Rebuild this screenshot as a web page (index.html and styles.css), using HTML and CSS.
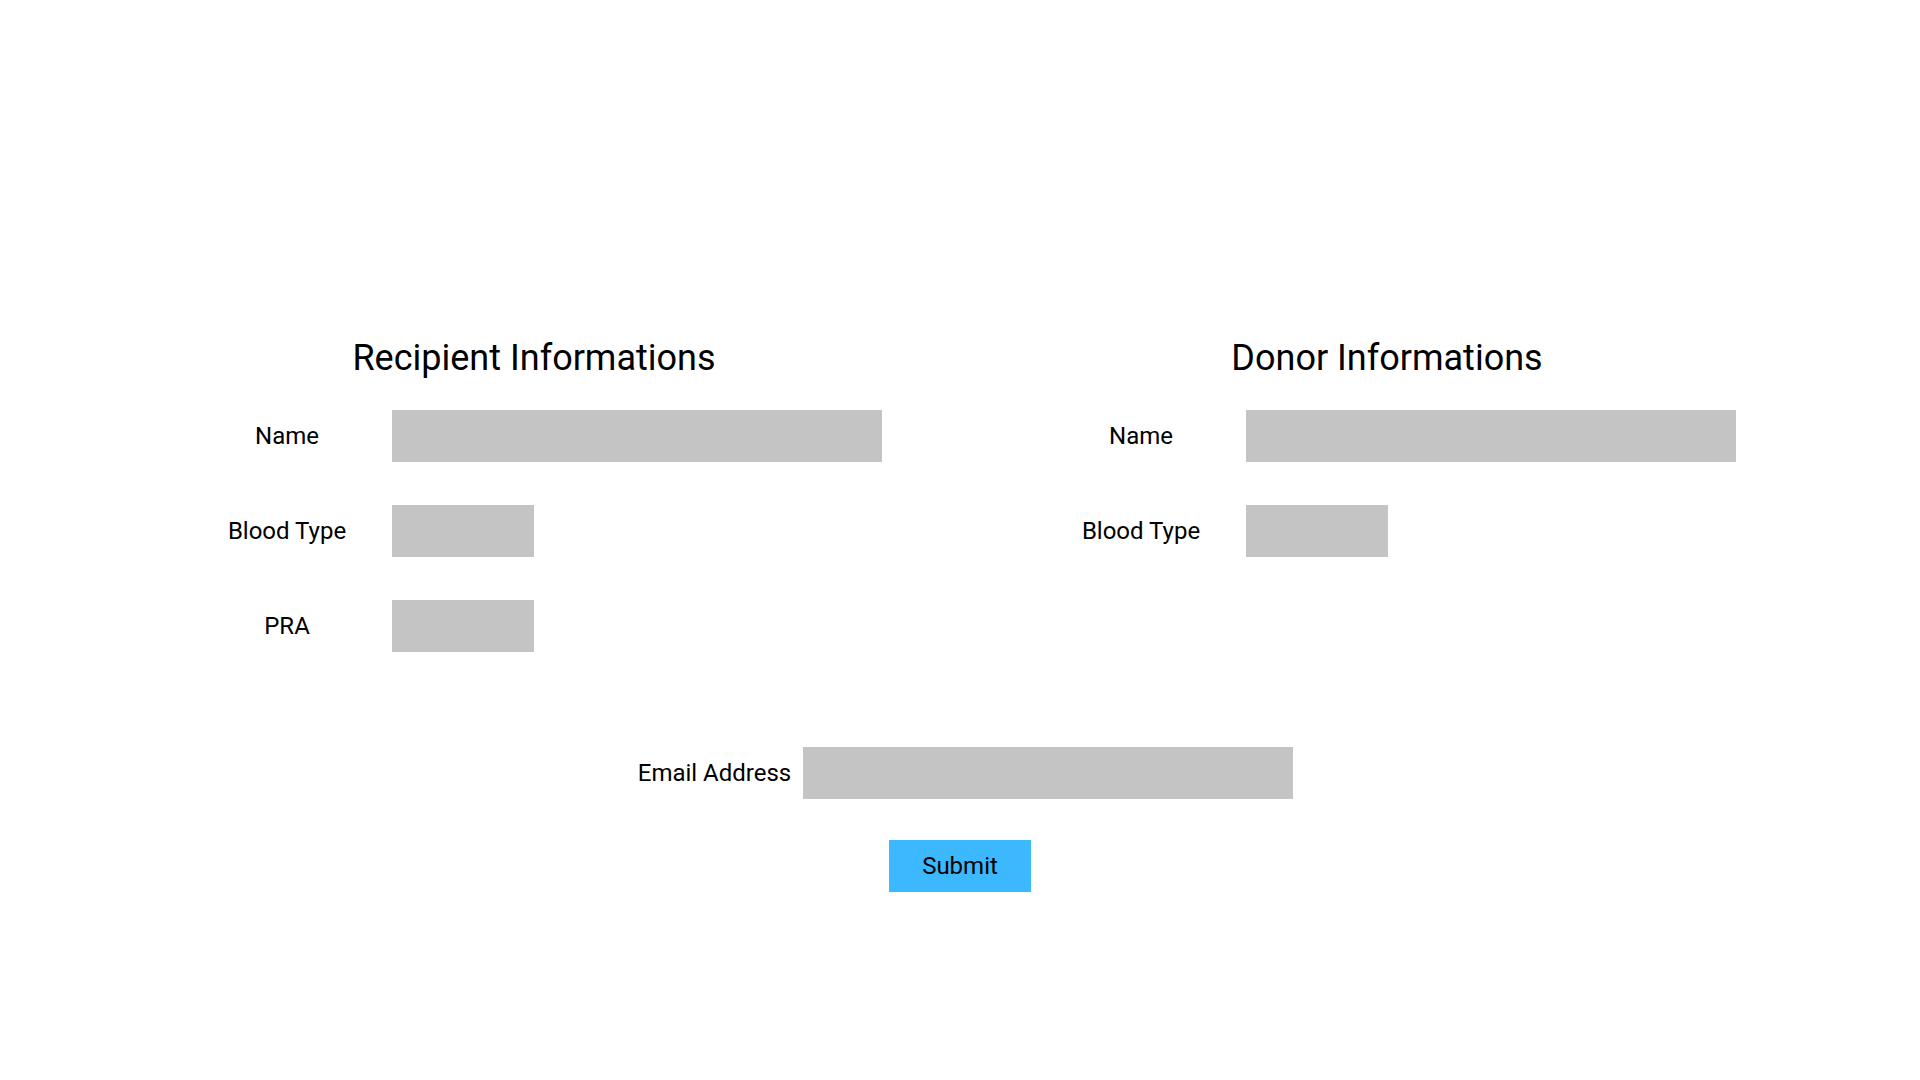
FILE: index.html
```html
<!DOCTYPE html>
<html lang="en">
<head>
<meta charset="utf-8">
<title>Donor / Recipient Form</title>
<link rel="stylesheet" href="styles.css">
</head>
<body>
<main class="page">
  <div class="columns">
    <section class="col">
      <h2 class="col-title">Recipient Informations</h2>
      <div class="rows">
        <div class="row"><span class="label">Name</span><span class="field field-wide"></span></div>
        <div class="row"><span class="label">Blood Type</span><span class="field field-short"></span></div>
        <div class="row"><span class="label">PRA</span><span class="field field-short"></span></div>
      </div>
    </section>
    <section class="col">
      <h2 class="col-title">Donor Informations</h2>
      <div class="rows">
        <div class="row"><span class="label">Name</span><span class="field field-wide"></span></div>
        <div class="row"><span class="label">Blood Type</span><span class="field field-short"></span></div>
      </div>
    </section>
  </div>
  <div class="email-row">
    <span class="email-label">Email Address</span>
    <span class="field field-wide"></span>
  </div>
  <div class="submit-row">
    <button class="submit" type="button">Submit</button>
  </div>
</main>
</body>
</html>
```

FILE: styles.css
```css
html, body {
  margin: 0;
  padding: 0;
  background: #ffffff;
}

body {
  font-family: Roboto, "Liberation Sans", sans-serif;
  color: #000000;
  width: 1920px;
  height: 1080px;
  overflow: hidden;
}

.page {
  padding: 337px 107px 0 107px;
}

.columns {
  display: grid;
  grid-template-columns: 854px 852px;
}

.col {
  display: flex;
  flex-direction: column;
}

.col-title {
  margin: 0;
  font-size: 36px;
  font-weight: 400;
  line-height: 42px;
  text-align: center;
}

.rows {
  margin-top: 31px;
  display: flex;
  flex-direction: column;
  gap: 43px;
}

.row {
  display: flex;
  align-items: center;
  height: 52px;
  padding-left: 105px;
}

.label {
  width: 150px;
  margin-right: 30px;
  text-align: center;
  font-size: 24px;
  line-height: 28px;
  white-space: nowrap;
}

.field {
  display: block;
  height: 52px;
  background: #c4c4c4;
}

.field-wide {
  width: 490px;
}

.field-short {
  width: 142px;
}

.email-row {
  margin-top: 95px;
  display: flex;
  justify-content: center;
  align-items: center;
  gap: 12px;
  padding-left: 11px;
  margin-left: -107px;
  margin-right: -107px;
}

.email-label {
  font-size: 24px;
  line-height: 28px;
  white-space: nowrap;
}

.submit-row {
  margin-top: 41px;
  display: flex;
  justify-content: center;
  margin-left: -107px;
  margin-right: -107px;
}

.submit {
  width: 142px;
  height: 52px;
  border: none;
  padding: 0;
  background: #3bb8fe;
  color: #000000;
  font-family: Roboto, "Liberation Sans", sans-serif;
  font-size: 24px;
  line-height: 28px;
  cursor: pointer;
}
```
